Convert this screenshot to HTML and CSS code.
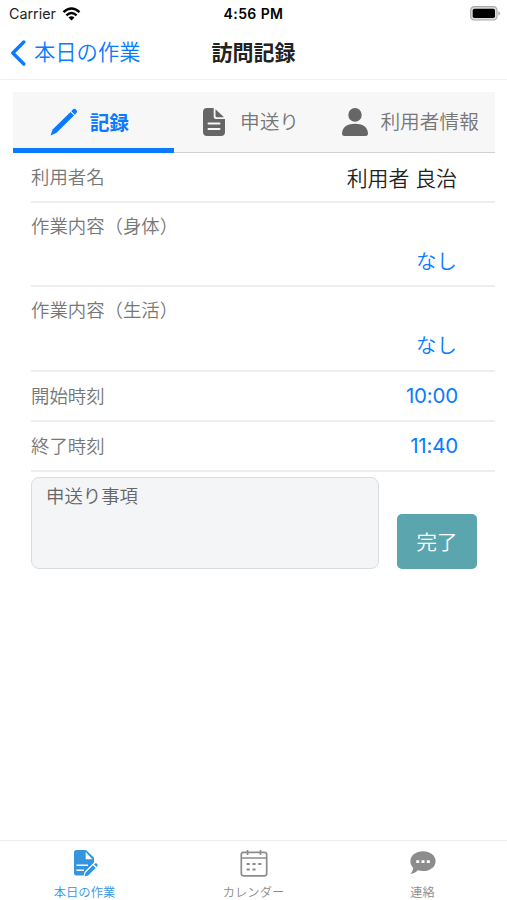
FILE: index.html
```html
<!DOCTYPE html>
<html lang="ja">
<head>
<meta charset="utf-8">
<meta name="viewport" content="width=device-width, initial-scale=1">
<title>訪問記録</title>
<link rel="stylesheet" href="styles.css">
</head>
<body>
<div class="status">
  <div class="carrier">Carrier
    <svg class="wifi" width="19" height="14" viewBox="0 0 18 14"><g fill="none" stroke="#000" stroke-width="2.4"><path d="M1 5.2Q9-2.2 17 5.2"/><path d="M3.9 8.3Q9 3.6 14.1 8.3"/></g><path d="M9 13.5 6 10.4Q9 7.9 12 10.4Z"/></svg>
  </div>
  <div class="clock">4:56 PM</div>
  <svg class="battery" width="31" height="15" viewBox="0 0 31 15"><rect x=".7" y=".7" width="26.3" height="13.3" rx="3.6" fill="#ddd" stroke="#aaa" stroke-width="1.2"/><rect x="2.7" y="2.7" width="22.3" height="9.3" rx="1.8"/><path d="M28.3 5.2Q32 7.4 28.3 9.6Z" fill="#aaa"/></svg>
</div>
<header class="nav">
  <a class="back"><svg width="17" height="26" viewBox="0 0 17 26"><path d="M14.8 2 3.8 13l11 11" fill="none" stroke="#0a7aff" stroke-width="3.4" stroke-linecap="round" stroke-linejoin="round"/></svg><span>本日の作業</span></a>
  <h1>訪問記録</h1>
</header>
<main>
  <nav class="tabs">
    <a class="tab active"><svg width="28" height="28" viewBox="0 0 28 28" fill="#0a7aff"><path d="M.5 27.5 2.6 21.5 20.5 4 24 7.5 6.3 25Z"/><path d="M21.3 3.2 22.8 1.6Q24.4 0 26.2 1.8T26.3 5.3L24.8 6.7Z"/></svg><span>記録</span></a>
    <a class="tab notes"><svg width="22" height="28" viewBox="0 0 22 28"><path d="M4 0H10.7V8.5Q10.7 11 13.2 11H22V24Q22 28 18 28H4Q0 28 0 24V4Q0 0 4 0Z" fill="#666"/><path d="M12.5 1.2 21 9.3H14Q12.5 9.3 12.5 7.8Z" fill="#666"/><path d="M5.5 15.5h11M5.5 21h11" stroke="#f7f7f7" stroke-width="2" stroke-linecap="round"/></svg><span>申送り</span></a>
    <a class="tab user"><svg width="26" height="28" viewBox="0 0 26 28" fill="#666"><ellipse cx="13" cy="6.9" rx="6.7" ry="6.9"/><path d="M0 26C0 18.5 6 15.7 13 15.7S26 18.5 26 26Q26 28 23.5 28H2.5Q0 28 0 26Z"/></svg><span>利用者情報</span></a>
  </nav>
  <section class="rows">
    <div class="row"><span>利用者名</span><b class="name">利用者 良治</b></div>
    <div class="row tall"><span>作業内容（身体）</span><b>なし</b></div>
    <div class="row tall"><span>作業内容（生活）</span><b>なし</b></div>
    <div class="row"><span>開始時刻</span><b class="time">10:00</b></div>
    <div class="row"><span>終了時刻</span><b class="time">11:40</b></div>
  </section>
  <div class="compose">
    <div class="memo">申送り事項</div>
    <button class="done">完了</button>
  </div>
</main>
<footer class="bottom">
  <a class="item selected"><svg width="26" height="28" viewBox="0 0 26 28"><path d="M4.5 1H14L22 8.7V13.5L12.5 23 11.7 26.5H4.5Q2 26.5 2 24V3.5Q2 1 4.5 1Z" fill="#3494de"/><path d="M13.7 3V10.2H20.4Z" fill="#fff"/><path d="M4.5 16.2H16M4.5 21.2H12" stroke="#fff" stroke-width="1.6"/><path d="M12.5 27.5 13.5 23.7 21 16.2 23.7 18.9 16.2 26.4ZM22 15.3 23 14.4Q24.2 13.8 25.1 14.8T25.4 17.1L24.7 18Z" fill="#3494de" stroke="#fff" stroke-width="1.2" paint-order="stroke"/></svg><span>本日の作業</span></a>
  <a class="item"><svg width="28" height="28" viewBox="0 0 28 28"><g fill="none" stroke="#8c8c8c" stroke-width="1.7"><rect x="1.3" y="3.4" width="25.4" height="23.4" rx="2.2"/><path d="M1.3 9H26.7M7.5 1V6M20.5 1V6"/><path stroke-width="2" stroke-dasharray="3.2 2.6" d="M6.6 15H22M6.6 20.5H17"/></g></svg><span>カレンダー</span></a>
  <a class="item"><svg width="28" height="28" viewBox="0 0 28 28"><path d="M14 2.3C21 2.3 26.6 6.5 26.6 12.2S21 22.1 14 22.1Q11.3 22.1 8.8 21.3C6.7 23.3 4.5 24.7 1.4 25Q3.9 22.3 4.3 19C2.5 17.2 1.4 15 1.4 12.2 1.4 6.5 7 2.3 14 2.3Z" fill="#8c8c8c"/><path d="M7.2 11.2h3v2.8h-3zm5.3 0h3v2.8h-3zm5.3 0h3v2.8h-3z" fill="#fff"/></svg><span>連絡</span></a>
</footer>
</body>
</html>
```

FILE: styles.css
```css
* { box-sizing: border-box; }
body { margin: 0; height: 900px; display: flex; flex-direction: column; background: #fff; color: #222; font-family: Inter, "Noto Sans CJK JP", sans-serif; font-weight: 350; }
svg { display: block; flex: none; }
.status { height: 27px; display: grid; grid-template-columns: 1fr 1fr 1fr; align-items: center; padding: 0 6px 0 9px; color: #000; font-size: 14px; }
.carrier { display: flex; align-items: center; gap: 6px; color: #222; font-size: 14.3px; font-weight: 400; }
.clock { text-align: center; font-weight: 600; letter-spacing: .4px; padding-right: 3px; }
.battery { justify-self: end; }
.nav { height: 53px; border-bottom: 1px solid #f2f2f2; display: grid; grid-template-columns: 1fr 1fr 1fr; align-items: center; padding: 0 9px; }
.back { display: flex; align-items: center; gap: 8px; color: #0a7aff; font-size: 21.3px; line-height: 30px; white-space: nowrap; }
.back span { margin-top: -2px; }
h1 { margin: 0; text-align: center; font-size: 21px; font-weight: 700; line-height: 30px; }
main { padding: 12px 12px 0 13px; flex: 1; }
.tabs { height: 61px; display: grid; grid-template-columns: 1fr 1fr 1fr; background: #f7f7f7; border-bottom: 1px solid #d2d2d2; }
.tab { height: 61px; display: flex; align-items: center; justify-content: center; gap: 12px; color: #777; font-size: 19.7px; white-space: nowrap; padding-bottom: 2px; }
.tab span { margin-top: -2px; }
.active { color: #0a7aff; font-weight: 700; border-bottom: 5px solid #0a7aff; padding: 4px 8px 0 0; }
.notes { gap: 15px; padding-right: 6px; }
.user { padding-right: 8px; }
.rows { margin-left: 18px; }
.row { height: 50px; display: flex; justify-content: space-between; align-items: center; padding-right: 38px; border-bottom: 2px solid #eee; color: #777; font-size: 18.4px; }
.row b { font-size: 20.5px; font-weight: 350; color: #0a7aff; }
.row .name { color: #222; font-size: 20.9px; padding-top: 3px; }
.row .time { font-weight: 400; letter-spacing: -.2px; margin-right: -1px; padding-top: 1px; }
.tall { height: 84.3px; align-items: flex-start; padding-top: 9px; }
.row span, .row b { line-height: 28px; }
.tall b { margin-top: 36px; }
.compose { display: flex; align-items: flex-end; gap: 18px; margin: 5px 0 0 18px; }
.memo { width: 348px; height: 92px; border: 1px solid #dadddf; border-radius: 8px; background: #f3f5f7; padding: 4px 14px; font-size: 18.4px; line-height: 28px; color: #666; }
.done { width: 80px; height: 55px; border: 0; border-radius: 5px; background: #5ba6ae; color: #fff; font: 350 20.5px "Noto Sans CJK JP", sans-serif; padding: 0; }
.bottom { height: 60px; border-top: 1px solid #eee; display: grid; grid-template-columns: 1fr 1fr 1fr; }
.item { display: flex; flex-direction: column; align-items: center; padding-top: 8px; color: #8c8c8c; font-size: 12.3px; line-height: 18px; }
.item span { margin-top: 7px; }
.selected { color: #3494de; }
```
